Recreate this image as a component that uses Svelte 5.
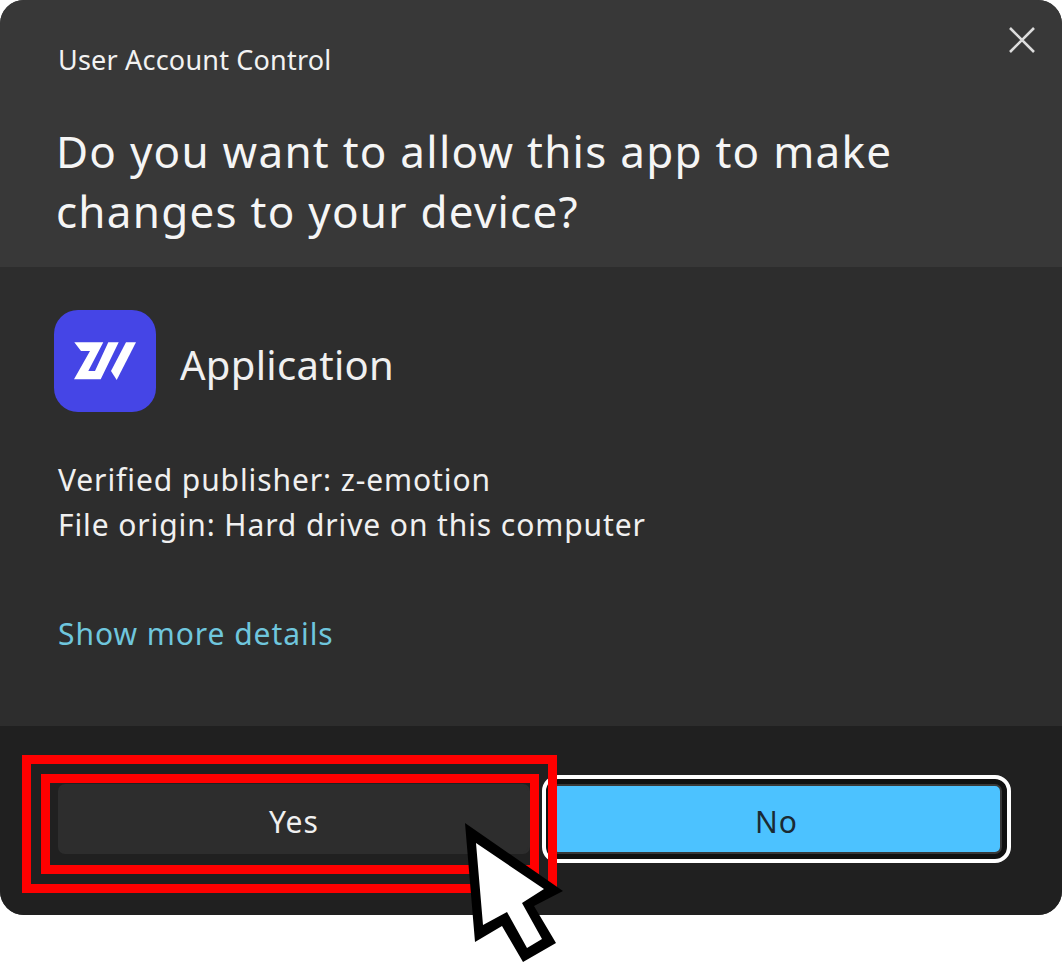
<script>
  let title = "Do you want to allow this app to make changes to your device?";
</script>

<style>
  :global(body) {
    margin: 0;
    background: #fff;
  }
  .page {
    position: relative;
    width: 1062px;
    height: 975px;
    overflow: hidden;
    font-family: "Noto Sans", "Open Sans", sans-serif;
  }
  .dialog {
    position: relative;
    display: flex;
    flex-direction: column;
    height: 915px;
    border-radius: 24px;
    overflow: hidden;
    background: #2d2d2d;
  }
  .head {
    height: 267px;
    box-sizing: border-box;
    padding: 38px 120px 0 56px;
    background: #383838;
    color: #f2f2f2;
  }
  .caption {
    margin: 0 0 0 2px;
    font-size: 27px;
    line-height: 44px;
    letter-spacing: 0.2px;
  }
  h1 {
    margin: 39px 0 0;
    font-size: 44px;
    line-height: 60px;
    font-weight: 400;
    letter-spacing: 1.25px;
    color: #f5f5f5;
  }
  .close {
    position: absolute;
    top: 26px;
    right: 26px;
    width: 28px;
    height: 28px;
  }
  .body {
    flex: 1;
    box-sizing: border-box;
    padding: 43px 54px 0;
    color: #f0f0f0;
  }
  .app {
    display: flex;
    align-items: center;
    gap: 24px;
  }
  .logo {
    display: block;
    width: 102px;
    height: 102px;
  }
  .name {
    padding-top: 6px;
    font-size: 40px;
    letter-spacing: 0.3px;
  }
  .info {
    margin: 45px 0 0 4px;
    font-size: 30px;
    line-height: 45px;
    letter-spacing: 0.9px;
  }
  .more {
    display: block;
    margin: 64px 0 0 4px;
    font-size: 30px;
    line-height: 45px;
    letter-spacing: 0.95px;
    color: #6fc6dd;
    text-decoration: none;
  }
  .foot {
    display: grid;
    grid-template-columns: 472px 451px;
    column-gap: 21px;
    height: 189px;
    box-sizing: border-box;
    padding: 58px 60px 0 58px;
    background: #202020;
  }
  button {
    height: 70px;
    border-radius: 7px;
    border: 2px solid #2d2d2d;
    font: inherit;
    font-size: 30px;
    letter-spacing: 1px;
    padding: 5px 0 0;
  }
  .yes {
    background: #2d2d2d;
    color: #f0f0f0;
  }
  .no {
    background: #4cc2ff;
    border-color: #383838;
    color: #1a2a33;
    outline: 4px solid #fff;
    outline-offset: 5px;
    box-shadow: 0 0 0 5px #111;
  }
  .mark {
    position: absolute;
    box-sizing: border-box;
    border: 9px solid #f00;
  }
  .outer {
    left: 22px;
    top: 755px;
    width: 535px;
    height: 138px;
  }
  .inner {
    left: 41px;
    top: 774px;
    width: 498px;
    height: 100px;
  }
  .cursor {
    position: absolute;
    left: 460px;
    top: 820px;
    width: 110px;
    height: 145px;
  }
</style>

<div class="page">
  <div class="dialog">
    <div class="head">
      <p class="caption">User Account Control</p>
      <h1>{title}</h1>
      <svg class="close" viewBox="0 0 28 28" aria-label="Close">
        <path d="M2 2 L26 26 M26 2 L2 26" stroke="#dcdcdc" stroke-width="2.6" fill="none" />
      </svg>
    </div>

    <div class="body">
      <div class="app">
        <svg class="logo" viewBox="0 0 102 102">
          <rect width="102" height="102" rx="24" fill="#4545e6" />
          <polygon fill="#fff" points="20.3,32.3 49.3,32.3 34.3,61 41,61 54.3,32.3 64.7,32.3 46.7,69.3 20,69.3 36,41 27,41" />
          <polygon fill="#fff" points="72,32.3 82,32.3 62.7,70 57,61" />
        </svg>
        <span class="name">Application</span>
      </div>
      <div class="info">
        Verified publisher: z-emotion<br />
        File origin: Hard drive on this computer
      </div>
      <a class="more" href="#details">Show more details</a>
    </div>

    <div class="foot">
      <button class="yes">Yes</button>
      <button class="no">No</button>
    </div>
  </div>

  <div class="mark outer"></div>
  <div class="mark inner"></div>

  <svg class="cursor" viewBox="460 820 110 145">
    <polygon fill="#000" points="465,823 563,891 534,906 556,943 523,962 502,926 475,942" />
    <polygon fill="#fff" points="476,843 544,889 522,903 542,939 527,948 507,912 483,925" />
  </svg>
</div>
